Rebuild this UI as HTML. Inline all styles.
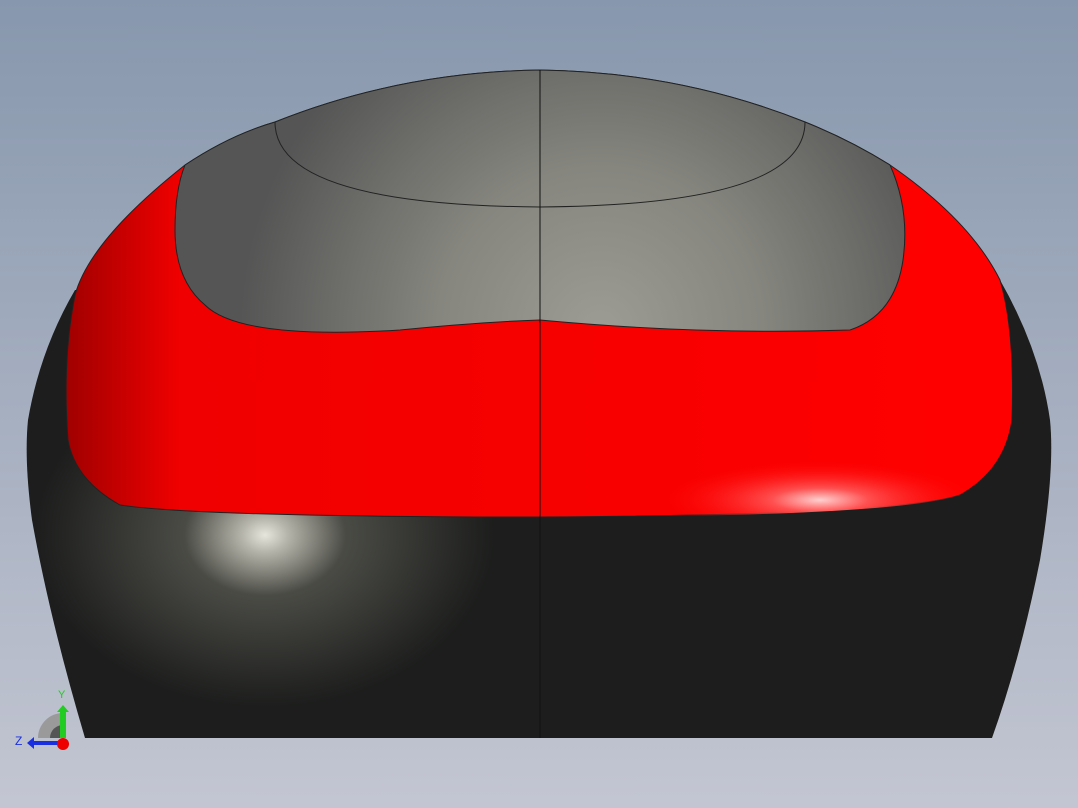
<!DOCTYPE html>
<html><head><meta charset="utf-8"><style>
html,body{margin:0;padding:0;width:1078px;height:808px;overflow:hidden}
</style></head><body>
<svg width="1078" height="808" viewBox="0 0 1078 808" xmlns="http://www.w3.org/2000/svg">
<defs>
<linearGradient id="bg" x1="0" y1="0" x2="0" y2="1">
<stop offset="0" stop-color="#8797ad"/><stop offset="1" stop-color="#c3c6d2"/></linearGradient>
<radialGradient id="blk" gradientUnits="userSpaceOnUse" cx="265" cy="535" r="230" gradientTransform="translate(265 535) scale(1 0.75) translate(-265 -535)">
<stop offset="0" stop-color="#e6e6dc"/><stop offset="0.1" stop-color="#b5b4aa"/><stop offset="0.35" stop-color="#4a4b45"/><stop offset="1" stop-color="#1c1d1c"/></radialGradient>
<radialGradient id="red" gradientUnits="userSpaceOnUse" cx="820" cy="500" r="160" gradientTransform="translate(820 500) scale(1 0.25) translate(-820 -500)">
<stop offset="0" stop-color="#ffd0d0"/><stop offset="0.3" stop-color="#ff5050"/><stop offset="1" stop-color="#ff0000" stop-opacity="0"/></radialGradient>
<linearGradient id="redl" x1="0" y1="0" x2="1" y2="0">
<stop offset="0" stop-color="#a00000"/><stop offset="0.12" stop-color="#f00000"/><stop offset="1" stop-color="#ff0000"/></linearGradient>
<radialGradient id="gry" gradientUnits="userSpaceOnUse" cx="600" cy="330" r="360">
<stop offset="0" stop-color="#9c9c94"/><stop offset="0.45" stop-color="#86867f"/><stop offset="1" stop-color="#555555"/></radialGradient>
</defs>
<rect width="1078" height="808" fill="url(#bg)"/>
<path d="M85,738 Q50,620 32,520 Q24,460 28,420 Q40,350 75,290 L1000,280 Q1040,350 1050,420 Q1055,470 1040,560 Q1020,660 992,738 Z" fill="url(#blk)"/>
<path d="M75,295 Q90,240 185,165 Q230,135 275,122 Q400,72 540,70 Q680,72 805,122 Q850,140 890,165 Q970,220 1000,280 Q1015,330 1012,420 Q1005,470 960,495 Q900,515 540,517 Q200,517 120,505 Q75,480 68,440 Q62,360 75,295 Z" fill="url(#redl)" stroke="#222" stroke-width="1"/>
<path d="M600,517 Q900,515 960,495 Q990,480 1000,460 L600,460 Z" fill="url(#red)"/>
<path d="M185,165 Q230,135 275,122 Q400,72 540,70 Q680,72 805,122 Q850,140 890,165 Q910,210 903,260 Q895,315 850,330 Q700,335 540,320 Q480,322 400,330 Q240,340 205,305 Q175,280 175,230 Q175,190 185,165 Z" fill="url(#gry)" stroke="#222" stroke-width="1"/>
<path d="M275,122 Q275,205 540,207 Q805,205 805,122" fill="none" stroke="#222" stroke-width="1"/>
<line x1="540" y1="70" x2="540" y2="738" stroke="#111" stroke-width="1"/>
<path d="M38,738 A25,25 0 0 1 63,713 L63,738 Z" fill="#9a9a9a"/>
<path d="M50,738 A13,13 0 0 1 63,725 L63,738 Z" fill="#555"/>
<rect x="60" y="712" width="6" height="26" fill="#2c2"/>
<path d="M57,712 L63,705 L69,712 Z" fill="#2c2"/>
<rect x="34" y="741" width="29" height="4" fill="#1a2fe0"/>
<path d="M34,737 L27,743 L34,749 Z" fill="#1a2fe0"/>
<circle cx="63" cy="744" r="6" fill="#e00"/>
<text x="58" y="698" font-family="Liberation Sans,sans-serif" font-size="11" fill="#2c2">Y</text>
<text x="15" y="745" font-family="Liberation Sans,sans-serif" font-size="12" fill="#1a2fe0">Z</text>
</svg>
</body></html>
